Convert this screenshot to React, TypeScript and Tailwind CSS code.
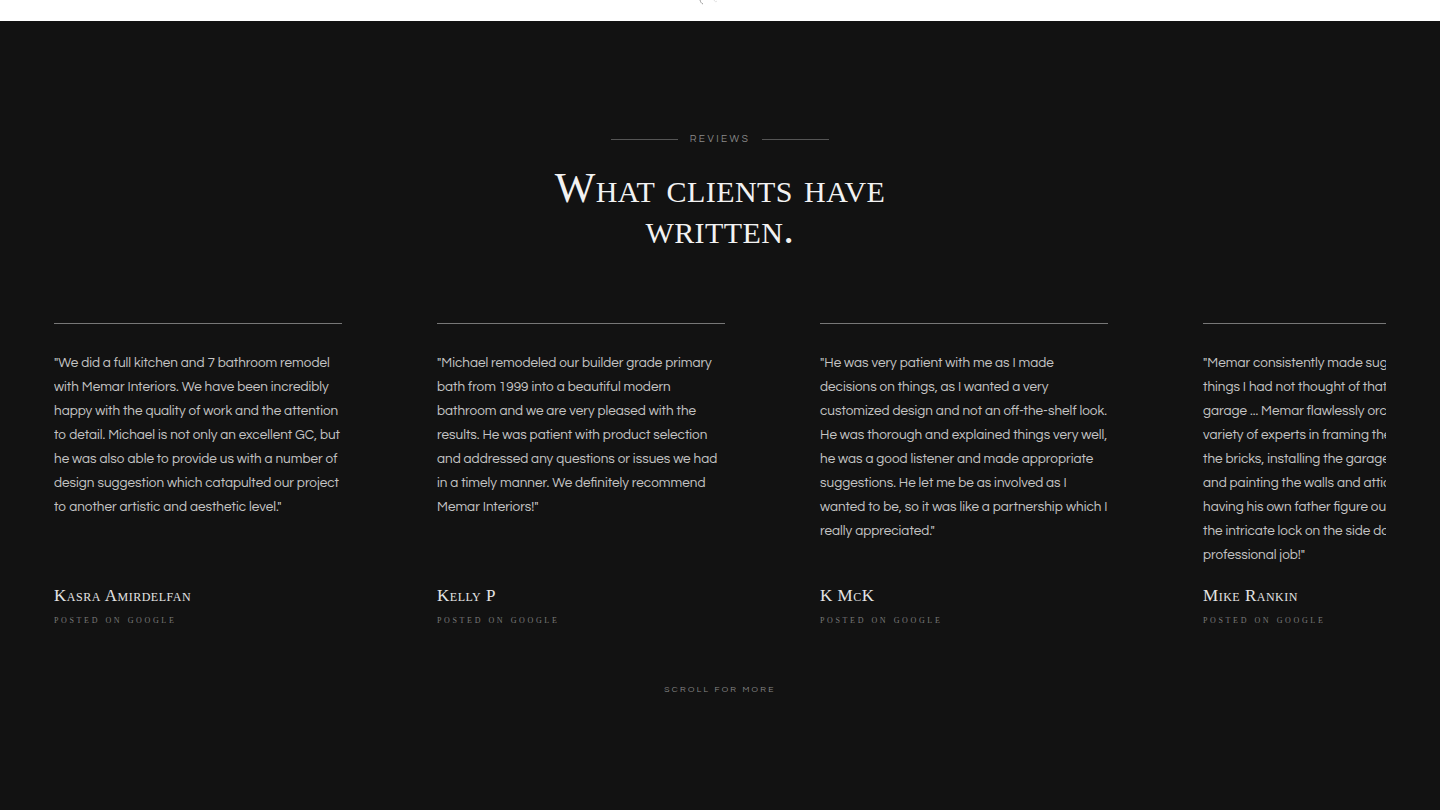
import React from "react";

const reviews = [
  {
    lines: [
      '"We did a full kitchen and 7 bathroom remodel',
      "with Memar Interiors. We have been incredibly",
      "happy with the quality of work and the attention",
      "to detail. Michael is not only an excellent GC, but",
      "he was also able to provide us with a number of",
      "design suggestion which catapulted our project",
      'to another artistic and aesthetic level."',
    ],
    name: "Kasra Amirdelfan",
  },
  {
    lines: [
      '"Michael remodeled our builder grade primary',
      "bath from 1999 into a beautiful modern",
      "bathroom and we are very pleased with the",
      "results. He was patient with product selection",
      "and addressed any questions or issues we had",
      "in a timely manner. We definitely recommend",
      'Memar Interiors!"',
    ],
    name: "Kelly P",
  },
  {
    lines: [
      '"He was very patient with me as I made',
      "decisions on things, as I wanted a very",
      "customized design and not an off-the-shelf look.",
      "He was thorough and explained things very well,",
      "he was a good listener and made appropriate",
      "suggestions. He let me be as involved as I",
      "wanted to be, so it was like a partnership which I",
      'really appreciated."',
    ],
    name: "K McK",
  },
  {
    lines: [
      '"Memar consistently made suggestions on',
      "things I had not thought of that made the",
      "garage ... Memar flawlessly orchestrated a",
      "variety of experts in framing the door, fixing",
      "the bricks, installing the garage door, wiring",
      "and painting the walls and attic, and even",
      "having his own father figure out how to fix",
      "the intricate lock on the side door. Very",
      'professional job!"',
    ],
    name: "Mike Rankin",
  },
];

const serif = "font-['Liberation_Serif','DejaVu_Serif',serif] [font-variant:small-caps]";
const sans = "font-['Questrial','Liberation_Sans','Noto_Sans',sans-serif]";

export default function App() {
  return (
    <div className="min-h-[810px] w-full bg-[#121212]">
      <div className="relative flex h-[21px] justify-center bg-white">
        <svg width="24" height="6" viewBox="0 0 24 6" className="ml-[-20px]">
          <path d="M2 0 C 2.5 2, 3.5 3.5, 5 4" stroke="#9a9a9a" strokeWidth="1" fill="none" />
          <path d="M16 0 C 17 2, 18 2, 19 1" stroke="#e0e0e0" strokeWidth="1" fill="none" />
        </svg>
      </div>

      <div className="flex flex-col items-center pt-[111px]">
        <div className="flex items-center gap-[12px]">
          <div className="h-px w-[67px] bg-[#555]" />
          <span className={`${sans} text-[10px] leading-[14px] tracking-[0.25em] text-[#8a8a8a]`}>
            REVIEWS
          </span>
          <div className="h-px w-[67px] bg-[#555]" />
        </div>
        <h2
          className={`${serif} mt-[21px] text-center text-[43px] leading-[41px] tracking-[0.01em] text-[#f2f2f2]`}
        >
          What clients have
          <br />
          written.
        </h2>
      </div>

      <div className="mt-[74px] px-[54px]">
        <div className="overflow-hidden">
          <div className="flex w-max gap-[95px]">
            {reviews.map((r) => (
              <div key={r.name} className="flex w-[288px] shrink-0 flex-col border-t border-[#777] pt-[27px]">
                <p className={`${sans} text-[13.5px] leading-[24px] text-[#c4c4c4]`}>
                  {r.lines.map((l, i) => (
                    <span key={i} className="block whitespace-nowrap">
                      {l}
                    </span>
                  ))}
                </p>
                <div className="mt-auto pt-[19px]">
                  <div className={`${serif} text-[17px] leading-[20px] tracking-[0.03em] text-[#e4e4e4]`}>
                    {r.name}
                  </div>
                  <div
                    className={`${serif} mt-[6px] text-[11px] leading-[14px] tracking-[0.24em] text-[#7a7a7a]`}
                  >
                    posted on google
                  </div>
                </div>
              </div>
            ))}
          </div>
        </div>
      </div>

      <div className="mt-[58px] flex justify-center">
        <span className={`${sans} text-[8.5px] leading-[12px] tracking-[0.27em] text-[#8a8a8a]`}>
          SCROLL FOR MORE
        </span>
      </div>
    </div>
  );
}
